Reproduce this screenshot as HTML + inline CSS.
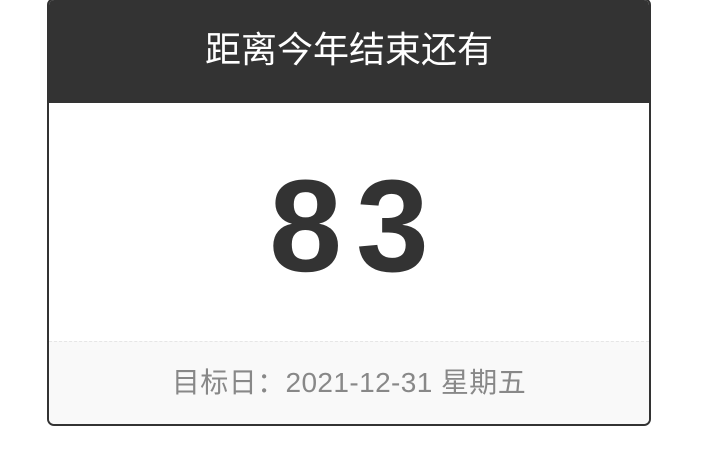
<!DOCTYPE html>
<html><head><meta charset="utf-8"><style>
body{margin:0;width:718px;height:468px;background:#fff;overflow:hidden;font-family:"Liberation Sans","Noto Sans CJK SC",sans-serif;}
.card{position:absolute;left:47px;top:-2px;width:600px;height:424px;border:2px solid #333;border-radius:7px;overflow:hidden;background:#fff;}
.hd{height:103px;background:#333;color:#fff;font-size:36px;text-align:center;line-height:100px;}
.num{position:absolute;left:0;right:0;top:151px;text-align:center;font-size:131px;font-weight:bold;color:#333;line-height:150px;letter-spacing:14px;padding-left:14px;}
.ft{position:absolute;left:0;right:0;bottom:0;height:82px;background:#f9f9f9;border-top:1px dashed #e6e6e6;text-align:center;line-height:82px;font-size:28px;color:#888;letter-spacing:0.4px;}
</style></head><body>
<div class="card">
<div class="hd">距离今年结束还有</div>
<div class="num">83</div>
<div class="ft">目标日：2021-12-31 星期五</div>
</div>
</body></html>
